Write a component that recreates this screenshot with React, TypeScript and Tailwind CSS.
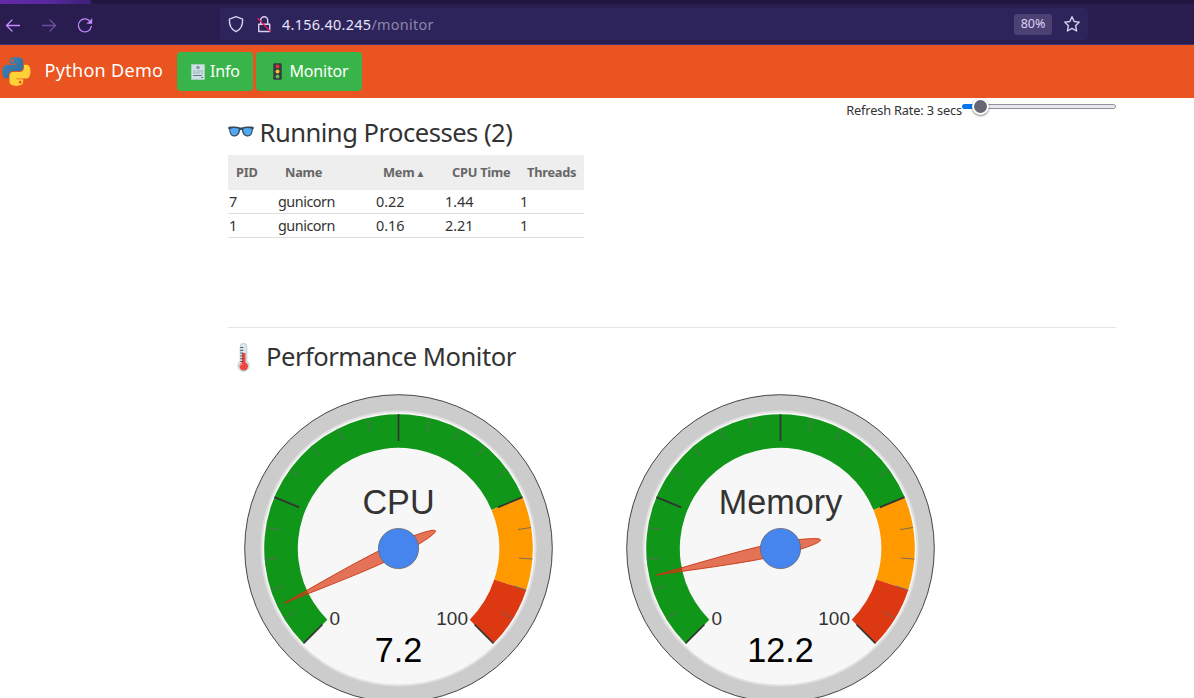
import React from 'react';

const FONT = "font-['Noto_Sans','Open_Sans',sans-serif]";

function polar(cx: number, cy: number, r: number, value: number) {
  const a = ((-135 + value * 2.7) * Math.PI) / 180;
  return [cx + r * Math.sin(a), cy - r * Math.cos(a)];
}

function band(from: number, to: number) {
  const [x1, y1] = polar(155, 155, 134.3, from);
  const [x2, y2] = polar(155, 155, 134.3, to);
  const [x3, y3] = polar(155, 155, 100.7, to);
  const [x4, y4] = polar(155, 155, 100.7, from);
  const large = (to - from) * 2.7 > 180 ? 1 : 0;
  return `M${x1},${y1} A134.3,134.3 0 ${large} 1 ${x2},${y2} L${x3},${y3} A100.7,100.7 0 ${large} 0 ${x4},${y4} Z`;
}

function Gauge({ label, value }: { label: string; value: number }) {
  const ticks = Array.from({ length: 21 }, (_, i) => i * 5);
  return (
    <svg width="310" height="310" viewBox="0.5 0.5 310 310" className="block shrink-0" fontFamily="'Liberation Sans', Arial, sans-serif">
      <circle cx="155" cy="155" r="153.8" fill="#cccccc" stroke="#333333" strokeWidth="0.9" />
      <circle cx="155" cy="155" r="137" fill="#f7f7f7" stroke="#e0e0e0" strokeWidth="2" />
      <path d={band(0, 75)} fill="#109618" />
      <path d={band(75, 90)} fill="#ff9900" />
      <path d={band(90, 100)} fill="#dc3912" />
      {ticks.map((t) => {
        const major = t % 25 === 0;
        const [x1, y1] = polar(155, 155, 134.3, t);
        const [x2, y2] = polar(155, 155, major ? 107.5 : 121, t);
        return <line key={t} x1={x1} y1={y1} x2={x2} y2={y2} stroke={major ? '#333333' : '#666666'} strokeWidth={major ? 1.7 : 0.85} />;
      })}
      <text x="155" y="120.5" textAnchor="middle" fontSize="34.2" fill="#333333">{label}</text>
      <text x="86" y="231.5" fontSize="19" fill="#333333">0</text>
      <text x="224.500" y="231.5" textAnchor="end" fontSize="19" fill="#333333">100</text>
      <text x="155" y="268.5" textAnchor="middle" fontSize="34.2" fill="#000000">{value}</text>
      <path
        transform={`translate(155 155) rotate(${-225 + value * 2.7})`}
        d="M127.5,0 C92,2.2 45,6.4 10,6.4 C-10,6.4 -41,3.6 -41,0 C-41,-3.6 -10,-6.4 10,-6.4 C45,-6.4 92,-2.2 127.5,0 Z"
        fill="#dc3912"
        fillOpacity="0.7"
        stroke="#c63310"
        strokeWidth="0.8"
      />
      <circle cx="155" cy="155" r="20.1" fill="#4684ee" stroke="#666666" strokeWidth="0.8" />
    </svg>
  );
}

function PythonLogo() {
  return (
    <svg width="29" height="29" viewBox="0 0 112 114" className="ml-[2px] shrink-0">
      <defs>
        <linearGradient id="pyBlue" x1="0" y1="0" x2="1" y2="1">
          <stop offset="0" stopColor="#4086bd" />
          <stop offset="1" stopColor="#306998" />
        </linearGradient>
        <linearGradient id="pyYellow" x1="0" y1="0" x2="1" y2="1">
          <stop offset="0" stopColor="#ffd43b" />
          <stop offset="1" stopColor="#ffcf35" />
        </linearGradient>
      </defs>
      <path fill="url(#pyBlue)" d="M54.9 1C50.3 1 46 1.4 42.1 2.1 30.8 4.1 28.7 8.3 28.7 16.2V26.6H55.5V30H18.6C10.8 30 4 34.7 1.8 43.6-.6 53.9-.7 60.3 1.8 70.7 3.7 78.4 8.2 84 16 84H25.2V71.8C25.2 62.9 32.9 55.1 42.1 55.1H68.8C76.3 55.1 82.3 49 82.3 41.5V16.2C82.3 8.9 76.1 3.4 68.8 2.1 64.2 1.4 59.5 1 54.9 1ZM40.4 9.1C43.2 9.1 45.5 11.4 45.5 14.3 45.5 17.1 43.2 19.4 40.4 19.4 37.6 19.4 35.4 17.1 35.4 14.3 35.4 11.4 37.6 9.1 40.4 9.1Z" />
      <path fill="url(#pyYellow)" d="M85.6 30V41.9C85.6 51.1 77.8 58.9 68.8 58.9H42.1C34.7 58.9 28.7 65.2 28.7 72.5V97.9C28.7 105.1 35 109.4 42.1 111.5 50.6 114 58.8 114.4 68.8 111.5 75.5 109.5 82.3 105.6 82.3 97.9V87.7H55.5V84.3H95.7C103.5 84.3 106.3 78.9 109 70.7 111.8 62.3 111.7 54.2 109 43.6 107.1 35.8 103.4 30 95.7 30H85.6Z" />
      <circle cx="70.6" cy="99" r="5.2" fill="#e95420" />
    </svg>
  );
}

function PageIcon() {
  return (
    <svg width="14" height="16" viewBox="0 0 14 16" className="shrink-0">
      <rect x="0.3" y="0.3" width="13.4" height="15.4" fill="#cfdfe6" />
      <circle cx="7" cy="3.5" r="1.8" fill="#829aa5" />
      <path d="M2 7h3M6 7h6M2 9h7M10 9h2" stroke="#9bb0bb" strokeWidth="1" />
      <path d="M2 11.5h9M10 13.5h2" stroke="#536f7d" strokeWidth="0.9" />
    </svg>
  );
}

function LightIcon() {
  return (
    <svg width="9" height="17" viewBox="0 0 9 17" className="shrink-0">
      <rect x="0.3" y="0.3" width="8.4" height="16.4" rx="1.3" fill="#2f3b40" />
      <circle cx="4.5" cy="3.4" r="2" fill="#e0323c" />
      <circle cx="4.5" cy="8.5" r="2" fill="#fbc02d" />
      <circle cx="4.5" cy="13.5" r="2" fill="#66b548" />
    </svg>
  );
}

function GlassesIcon() {
  return (
    <svg width="26" height="12" viewBox="0 0 26 12" className="shrink-0">
      <path d="M.3 1C4 .3 9 .6 12 1.600h2C17 .6 22 .3 25.700 1v1.900l-.9.7c-.2 4-1.600 6.900-5 6.900-3.400 0-5.300-2.300-6-6.500h-1.600c-.7 4.200-2.600 6.500-6 6.500S1.400 7.600 1.200 3.600L.3 2.900Z" fill="#354a57" />
      <path d="M2.200 2.700c3-.9 6.500-.8 8.700.3-.4 3.800-1.800 6.300-4.600 6.300-3 0-4-2.600-4.100-6.600ZM23.800 2.700c-3-.9-6.500-.8-8.700.3.4 3.800 1.800 6.300 4.600 6.300 3 0 4-2.600 4.100-6.600Z" fill="#51a8f3" />
    </svg>
  );
}

function ThermometerIcon() {
  return (
    <svg width="13" height="29" viewBox="0 0 13 29" className="shrink-0">
      <path d="M3.200 3.600a3.300 3.300 0 0 1 6.600 0V18.200a5.600 5.600 0 1 1-6.600 0Z" fill="#dce9ed" stroke="#b2d2da" strokeWidth="1" />
      <path d="M5 10h3.500v9.300a4.300 4.300 0 1 1-3.500 0Z" fill="#ee4640" />
      <path d="M3.300 4.500h3M3.300 7.300h3M3.300 10.100h3M3.300 12.900h3M3.300 15.700h3M3.300 18.500h3" stroke="#52484e" strokeWidth="1" />
      <path d="M3.500 22.500a3 3 0 0 1 1.500-2" stroke="#ff9b91" strokeWidth="1.300" fill="none" />
    </svg>
  );
}

function BrowserBar() {
  return (
    <header className="flex h-[45px] shrink-0 flex-col border-b border-[#3b3577] bg-[#291d4f]">
      <div className="h-1 shrink-0 bg-[#211642]">
        <div className="h-1 w-[92px] bg-linear-to-r from-[#6329a8] via-[#5929a0] to-[#3b2077] [clip-path:polygon(0_0,98%_0,100%_100%,0_100%)]" />
      </div>
      <div className="flex flex-1 items-center">
        <div className="flex w-[220px] items-center pt-px pl-1">
          <svg width="92" height="20" viewBox="0 0 92 20" fill="none" stroke="#c58bff" strokeWidth="1.300" strokeLinecap="round" strokeLinejoin="round">
            <path d="M15.500 10.500H2.500M8 5 2.500 10.500 8 16" />
            <path opacity="0.45" d="M38.500 10.500H51.500M46 5 51.500 10.500 46 16" />
            <path d="M86.600 7.300A6.500 6.500 0 1 0 87.300 11.500" />
            <path d="M87.900 4v4.500h-4.500Z" fill="#c58bff" strokeWidth="0.600" />
          </svg>
        </div>
        <div className="flex h-8 w-[868px] items-center rounded bg-[#2e245c]">
          <svg width="46" height="20" viewBox="0 0 46 20" className="ml-2" fill="none" stroke="#d8d0ed" strokeWidth="1.400" strokeLinejoin="round">
            <path d="M8 2.600 14.600 5.200C14.900 11.500 12.800 15.500 8 17.700 3.200 15.500 1.100 11.500 1.400 5.200Z" />
            <path d="M30.700 10.300h11v7.200h-11ZM32.700 10V6.300a3.500 3.500 0 0 1 7 0v3.500" />
            <path d="M29.500 4 42.500 17.500" stroke="#e41952" strokeWidth="1.300" />
          </svg>
          <div className="ml-2 flex-1 pt-px text-[14.4px] leading-8 tracking-[0.31px] whitespace-nowrap text-[#8d84ab]">
            <span className="text-[#e8e2f8]">4.156.40.245</span>/monitor
          </div>
          <div className="flex h-[21px] w-[38px] items-center justify-center rounded-[3px] bg-[#4c4173] pt-px text-[12.5px] text-[#ddd3f5]">80%</div>
          <svg width="18" height="18" viewBox="0 0 18 18" className="mr-[7px] ml-[11px]" fill="none" stroke="#d8d0ed" strokeWidth="1.400" strokeLinejoin="round">
            <path d="m9 1.700 2.200 4.800 5.100.6-3.700 3.600 1 5.300L9 13.400 4.400 16l1-5.300L1.700 7.100l5.100-.6Z" />
          </svg>
        </div>
      </div>
    </header>
  );
}

const rows = [
  ['7', 'gunicorn', '0.22', '1.44', '1'],
  ['1', 'gunicorn', '0.16', '2.21', '1'],
];

export default function App() {
  return (
    <div className={`flex h-[698px] w-full flex-col overflow-hidden bg-white text-[#333333] ${FONT}`}>
      <BrowserBar />
      <nav className="flex h-[53px] shrink-0 items-center bg-[#e95420] text-white">
        <div className="flex w-[177px] items-center">
          <PythonLogo />
          <span className="ml-[13.500px] pb-[3px] text-[18px] leading-8 tracking-[0.3px] whitespace-nowrap">Python Demo</span>
        </div>
        <button className="mr-[3px] flex h-[39px] w-[76px] items-center rounded-[4px] bg-[#38b44a] pl-[14px] text-[16px]">
          <PageIcon />
          <span className="ml-[5px] pb-[2px] tracking-[-0.2px]">Info</span>
        </button>
        <button className="flex h-[39px] w-[106px] items-center rounded-[4px] bg-[#38b44a] pl-[17px] text-[16px]">
          <LightIcon />
          <span className="ml-[7.500px] pb-[2px] tracking-[-0.2px]">Monitor</span>
        </button>
      </nav>
      <main className="ml-[228px] w-[888px]">
        <div className="flex h-[19px] justify-end text-[12.8px]">
          <span className="pt-[3px] leading-[19px] tracking-[-0.17px] whitespace-nowrap">Refresh Rate: 3 secs</span>
          <div className="flex h-[17px] w-[154px] items-center">
            <div className="h-[5px] w-[12px] rounded-l-full bg-[#0075f2]" />
            <div className="z-10 -mr-[2px] -ml-[2px] h-[17px] w-[17px] shrink-0 rounded-full border-2 border-white bg-[#676774] shadow-[0_1px_2px_rgba(0,0,0,0.5)]" />
            <div className="h-[5px] flex-1 rounded-r-full border border-[#8f8f9d] bg-[#e9e9ed]" />
          </div>
        </div>
        <h2 className="flex h-[38px] items-start text-[25.6px] leading-[32px]">
          <span className="pt-[9px]"><GlassesIcon /></span>
          <span className="ml-[5.500px] tracking-[-0.52px] whitespace-nowrap">Running Processes (2)</span>
        </h2>
        <table className="w-[356px] table-fixed border-separate border-spacing-0 text-left">
          <colgroup>
            <col className="w-[49px]" /><col className="w-[98px]" /><col className="w-[69px]" /><col className="w-[75px]" /><col className="w-[65px]" />
          </colgroup>
          <thead>
            <tr className="h-[35px] bg-[#eeeeee] text-[12.8px] tracking-[-0.25px] whitespace-nowrap text-[#666666]">
              <th className="p-0 pl-[8px]">PID</th>
              <th className="p-0 pl-[8px]">Name</th>
              <th className="p-0 pl-[8px]">Mem <span className="-ml-[2px] text-[10px]">▲</span></th>
              <th className="p-0 pl-[8px]">CPU Time</th>
              <th className="p-0 pl-[8px]">Threads</th>
            </tr>
          </thead>
          <tbody>
            {rows.map((row) => (
              <tr key={row[0]} className="h-[24px] text-[14.4px] leading-[23px]">
                {row.map((cell, i) => (
                  <td key={i} className={i === 1 ? 'border-b border-[#dddddd] p-0 tracking-[-0.48px]' : 'border-b border-[#dddddd] p-0 pl-[1px]'}>
                    <span className={i === 1 ? 'pl-[1px]' : ''}>{cell}</span>
                  </td>
                ))}
              </tr>
            ))}
          </tbody>
        </table>
        <hr className="mt-[89px] border-[#e5e5e5]" />
        <h2 className="mt-[12px] flex h-[54px] items-start text-[25.6px] leading-[32px]">
          <span className="ml-[9px] pt-[3px]"><ThermometerIcon /></span>
          <span className="ml-[16px] pt-px tracking-[-0.5px] whitespace-nowrap">Performance Monitor</span>
        </h2>
        <div className="ml-[16px] flex gap-[72px]">
          <Gauge label="CPU" value={7.2} />
          <Gauge label="Memory" value={12.2} />
        </div>
      </main>
    </div>
  );
}
